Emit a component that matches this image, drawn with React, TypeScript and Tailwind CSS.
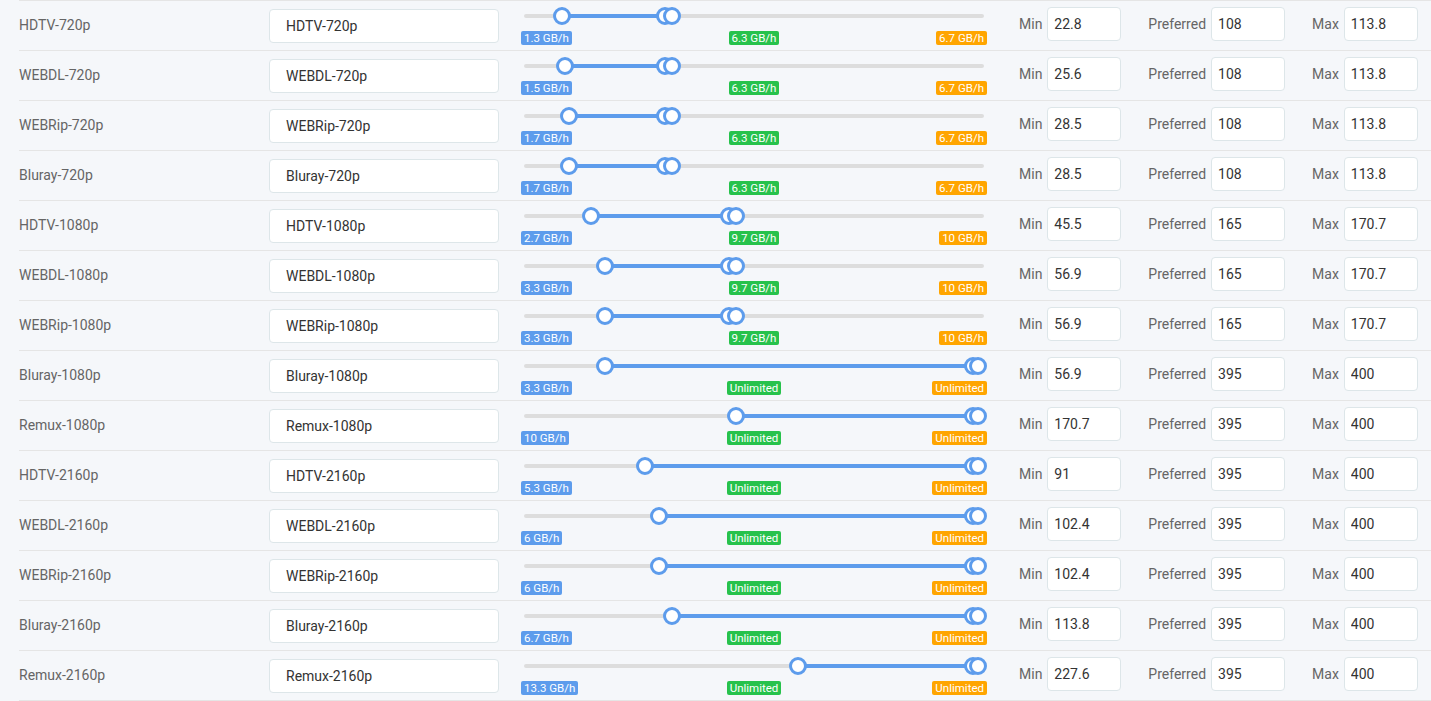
import React from 'react';

interface Definition {
  name: string;
  min: number;
  preferred: number;
  max: number;
  minLabel: string;
  preferredLabel: string;
  maxLabel: string;
}

const definitions: Definition[] = [
  { name: 'HDTV-720p', min: 22.8, preferred: 108, max: 113.8, minLabel: '1.3 GB/h', preferredLabel: '6.3 GB/h', maxLabel: '6.7 GB/h' },
  { name: 'WEBDL-720p', min: 25.6, preferred: 108, max: 113.8, minLabel: '1.5 GB/h', preferredLabel: '6.3 GB/h', maxLabel: '6.7 GB/h' },
  { name: 'WEBRip-720p', min: 28.5, preferred: 108, max: 113.8, minLabel: '1.7 GB/h', preferredLabel: '6.3 GB/h', maxLabel: '6.7 GB/h' },
  { name: 'Bluray-720p', min: 28.5, preferred: 108, max: 113.8, minLabel: '1.7 GB/h', preferredLabel: '6.3 GB/h', maxLabel: '6.7 GB/h' },
  { name: 'HDTV-1080p', min: 45.5, preferred: 165, max: 170.7, minLabel: '2.7 GB/h', preferredLabel: '9.7 GB/h', maxLabel: '10 GB/h' },
  { name: 'WEBDL-1080p', min: 56.9, preferred: 165, max: 170.7, minLabel: '3.3 GB/h', preferredLabel: '9.7 GB/h', maxLabel: '10 GB/h' },
  { name: 'WEBRip-1080p', min: 56.9, preferred: 165, max: 170.7, minLabel: '3.3 GB/h', preferredLabel: '9.7 GB/h', maxLabel: '10 GB/h' },
  { name: 'Bluray-1080p', min: 56.9, preferred: 395, max: 400, minLabel: '3.3 GB/h', preferredLabel: 'Unlimited', maxLabel: 'Unlimited' },
  { name: 'Remux-1080p', min: 170.7, preferred: 395, max: 400, minLabel: '10 GB/h', preferredLabel: 'Unlimited', maxLabel: 'Unlimited' },
  { name: 'HDTV-2160p', min: 91, preferred: 395, max: 400, minLabel: '5.3 GB/h', preferredLabel: 'Unlimited', maxLabel: 'Unlimited' },
  { name: 'WEBDL-2160p', min: 102.4, preferred: 395, max: 400, minLabel: '6 GB/h', preferredLabel: 'Unlimited', maxLabel: 'Unlimited' },
  { name: 'WEBRip-2160p', min: 102.4, preferred: 395, max: 400, minLabel: '6 GB/h', preferredLabel: 'Unlimited', maxLabel: 'Unlimited' },
  { name: 'Bluray-2160p', min: 113.8, preferred: 395, max: 400, minLabel: '6.7 GB/h', preferredLabel: 'Unlimited', maxLabel: 'Unlimited' },
  { name: 'Remux-2160p', min: 227.6, preferred: 395, max: 400, minLabel: '13.3 GB/h', preferredLabel: 'Unlimited', maxLabel: 'Unlimited' },
];

const toOffset = (value: number) => 7.5 + Math.pow(value / 400, 1 / 1.1) * 449.5;

const Handle: React.FC<{ value: number }> = ({ value }) => (
  <div
    className="absolute top-0 w-[18px] h-[18px] -ml-[9px] rounded-full bg-white border-[3px] border-[#5d9cec]"
    style={{ left: toOffset(value) }}
  />
);

const SizeSlider: React.FC<{ def: Definition }> = ({ def }) => {
  const start = toOffset(def.min);
  const end = toOffset(def.max);

  return (
    <div className="w-[466px] ml-[22px] flex flex-col">
      <div className="relative h-[18px]">
        <div className="absolute left-[3px] right-[3px] top-[7px] h-[4px] rounded-full bg-[#dddddd]" />
        <div className="absolute top-[7px] h-[4px] bg-[#5d9cec]" style={{ left: start, width: end - start }} />
        <Handle value={def.min} />
        <Handle value={def.preferred} />
        <Handle value={def.max} />
      </div>
      <div className="grid grid-cols-3 mt-[6px] text-[11.5px] leading-[14px] text-white">
        <span className="justify-self-start rounded-[2px] bg-[#5d9cec] px-[3px] whitespace-nowrap">{def.minLabel}</span>
        <span className="justify-self-center rounded-[2px] bg-[#27c24c] px-[3px] whitespace-nowrap">{def.preferredLabel}</span>
        <span className="justify-self-end rounded-[2px] bg-[#ffa500] px-[3px] whitespace-nowrap">{def.maxLabel}</span>
      </div>
    </div>
  );
};

const SizeInput: React.FC<{ label: string; value: number; className: string }> = ({ label, value, className }) => (
  <div className={`flex items-center mb-[3px] ${className}`}>
    <span className="text-[#656565]">{label}</span>
    <input
      readOnly
      defaultValue={String(value)}
      className="ml-[5px] w-[74px] h-[34px] px-[6px] rounded-[4px] border border-[#dde6e9] bg-white text-[#333] outline-none"
    />
  </div>
);

const DefinitionRow: React.FC<{ def: Definition }> = ({ def }) => (
  <div className="flex items-center h-[50px] border-t border-[#e5e5e5]">
    <div className="w-[250px] text-[#656565]">{def.name}</div>
    <input
      readOnly
      defaultValue={def.name}
      className="w-[230px] h-[34px] pl-[16px] rounded-[4px] border border-[#dde6e9] bg-white text-[#333] outline-none"
    />
    <SizeSlider def={def} />
    <SizeInput label="Min" value={def.min} className="ml-[32px]" />
    <SizeInput label="Preferred" value={def.preferred} className="ml-[27px]" />
    <SizeInput label="Max" value={def.max} className="ml-[27px]" />
  </div>
);

export default function App() {
  return (
    <div className="min-h-[701px] bg-[#f5f7fa] text-[14px]" style={{ fontFamily: 'Roboto, "Liberation Sans", sans-serif' }}>
      <div className="ml-[19px] border-b border-[#e5e5e5]">
        {definitions.map(def => (
          <DefinitionRow key={def.name} def={def} />
        ))}
      </div>
    </div>
  );
}
